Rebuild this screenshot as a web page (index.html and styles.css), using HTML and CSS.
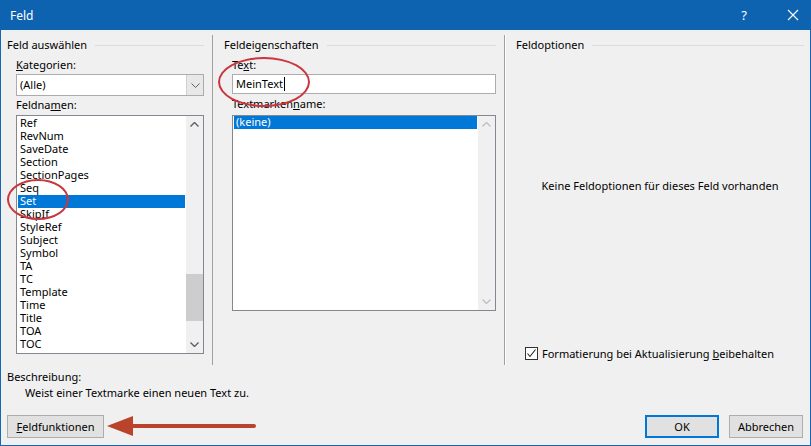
FILE: index.html
```html
<!DOCTYPE html>
<html>

<head>
    <link rel="stylesheet" href="styles.css">
    <title>Feld</title>
</head>

<body>
    <div class="window">
        <div class="titlebar">
            <span class="title">Feld</span>
            <div class="caption_buttons">
                <span class="help">?</span>
                <svg class="close" width="12" height="12" viewBox="0 0 12 12">
                    <path d="M1 1 L11 11 M11 1 L1 11" stroke="#ffffff" stroke-width="1.1" fill="none" />
                </svg>
            </div>
        </div>

        <div class="panels">
            <div class="panel panel_left">
                <div class="group_title">Feld auswählen</div>
                <div class="label indent"><u>K</u>ategorien:</div>
                <div class="combo indent">
                    <span class="combo_value">(Alle)</span>
                    <div class="combo_button">
                        <svg width="9" height="5" viewBox="0 0 9 5">
                            <path d="M0.5 0.5 L4.5 4.5 L8.5 0.5" stroke="#606060" fill="none" />
                        </svg>
                    </div>
                </div>
                <div class="label label_after_combo indent">Feldna<u>m</u>en:</div>
                <div class="listbox listbox_fields indent">
                    <ul class="items">
                        <li>Ref</li>
                        <li>RevNum</li>
                        <li>SaveDate</li>
                        <li>Section</li>
                        <li>SectionPages</li>
                        <li>Seq</li>
                        <li class="selected">Set</li>
                        <li>SkipIf</li>
                        <li>StyleRef</li>
                        <li>Subject</li>
                        <li>Symbol</li>
                        <li>TA</li>
                        <li>TC</li>
                        <li>Template</li>
                        <li>Time</li>
                        <li>Title</li>
                        <li>TOA</li>
                        <li>TOC</li>
                    </ul>
                    <div class="scrollbar">
                        <svg class="arrow" width="9" height="5" viewBox="0 0 9 5">
                            <path d="M0.5 4.5 L4.5 0.5 L8.5 4.5" stroke="#606060" stroke-width="1.4" fill="none" />
                        </svg>
                        <div class="track">
                            <div class="thumb"></div>
                        </div>
                        <svg class="arrow" width="9" height="5" viewBox="0 0 9 5">
                            <path d="M0.5 0.5 L4.5 4.5 L8.5 0.5" stroke="#606060" stroke-width="1.4" fill="none" />
                        </svg>
                    </div>
                </div>
            </div>

            <div class="panel panel_middle">
                <div class="group_title">Feldeigenschaften</div>
                <div class="label indent">Te<u>x</u>t:</div>
                <div class="textbox indent">MeinText<span class="caret"></span></div>
                <div class="label label_second indent">Textmarken<u>n</u>ame:</div>
                <div class="listbox listbox_marks indent">
                    <ul class="items">
                        <li class="selected">(keine)</li>
                    </ul>
                    <div class="scrollbar">
                        <svg class="arrow" width="9" height="5" viewBox="0 0 9 5">
                            <path d="M0.5 4.5 L4.5 0.5 L8.5 4.5" stroke="#c0c0c0" stroke-width="1.4" fill="none" />
                        </svg>
                        <div class="track"></div>
                        <svg class="arrow" width="9" height="5" viewBox="0 0 9 5">
                            <path d="M0.5 0.5 L4.5 4.5 L8.5 0.5" stroke="#c0c0c0" stroke-width="1.4" fill="none" />
                        </svg>
                    </div>
                </div>
            </div>

            <div class="panel panel_right">
                <div class="group_title">Feldoptionen</div>
                <div class="no_options">Keine Feldoptionen für dieses Feld vorhanden</div>
                <div class="check_row">
                    <span class="checkbox">
                        <svg width="11" height="11" viewBox="0 0 11 11">
                            <path d="M1.5 5.5 L4 8.5 L9.5 1.5" stroke="#222222" stroke-width="1.1" fill="none" />
                        </svg>
                    </span>
                    <span>Formatierung bei Aktualisierung <u>b</u>eibehalten</span>
                </div>
            </div>
        </div>

        <div class="bottom">
            <div class="description_label">Beschreibung:</div>
            <div class="description">Weist einer Textmarke einen neuen Text zu.</div>
            <div class="button_row">
                <button class="button button_codes"><u>F</u>eldfunktionen</button>
                <div class="spacer"></div>
                <button class="button button_default">OK</button>
                <button class="button">Abbrechen</button>
            </div>
        </div>

        <!-- annotations drawn over the dialog -->
        <div class="mark mark_set"></div>
        <div class="mark mark_text"></div>
        <svg class="pointer" width="152" height="24" viewBox="0 0 152 24">
            <polygon points="1,12 27,2 27,22" fill="#b9432b" />
            <line x1="25" y1="12" x2="148" y2="12" stroke="#b9432b" stroke-width="4" stroke-linecap="round" />
        </svg>
    </div>
</body>

</html>
```

FILE: styles.css
```css
* {
    box-sizing: border-box;
}

body {
    margin: 0;
    font-family: "Noto Sans", sans-serif;
    font-size: 11px;
    color: #000000;
}

.window {
    position: relative;
    width: 811px;
    height: 446px;
    display: flex;
    flex-direction: column;
    background: #f0f0f0;
    border: 1px solid #1467b4;
    border-top: none;
}

.titlebar {
    height: 30px;
    margin: 0 -1px;
    display: flex;
    align-items: center;
    justify-content: space-between;
    background: #0e63b1;
    color: #ffffff;
    padding-left: 10px;
    font-size: 12px;
}

.caption_buttons {
    display: flex;
    align-items: center;
}

.help {
    font-size: 13px;
    margin-right: 40px;
}

.close {
    margin-right: 12px;
}

.panels {
    display: flex;
    height: 335px;
}

.panel {
    display: flex;
    flex-direction: column;
    margin-top: 5px;
    padding-top: 2px;
}

.panel_left {
    width: 212px;
    padding-left: 6px;
    padding-right: 8px;
    border-right: 1px solid #a0a0a0;
}

.panel_middle {
    width: 292px;
    padding-left: 11px;
    padding-right: 8px;
    border-right: 1px solid #a0a0a0;
}

.panel_right {
    flex: 1;
    padding-left: 10px;
    padding-right: 6px;
    border-left: 1px solid #ffffff;
}

.group_title {
    display: flex;
    align-items: center;
    height: 16px;
    line-height: 16px;
}

.group_title::after {
    content: "";
    flex: 1;
    height: 1px;
    margin-left: 8px;
    background: #dcdcdc;
}

.label {
    height: 16px;
    line-height: 16px;
    margin-top: 4px;
}

.label_after_combo {
    margin-top: 1px;
}

.label + .listbox {
    margin-top: 2px;
}

.indent {
    margin-left: 9px;
}

.panel_middle .indent {
    margin-left: 8px;
}

.combo {
    height: 22px;
    margin-top: 1px;
    display: flex;
    border: 1px solid #acacac;
    background: #ffffff;
}

.combo_value {
    flex: 1;
    line-height: 20px;
    padding-left: 3px;
}

.combo_button {
    width: 17px;
    display: flex;
    align-items: center;
    justify-content: center;
    background: #e8e8e8;
    border-left: 1px solid #d0d0d0;
}

.listbox {
    display: flex;
    border: 1px solid #828790;
    background: #ffffff;
}

.listbox_fields {
    height: 239px;
}

.listbox_marks {
    height: 196px;
    margin-top: 3px !important;
}

.items {
    flex: 1;
    margin: 0;
    padding: 0 1px;
    list-style: none;
}

.listbox_fields .items {
    padding-top: 1px;
}

.items li {
    height: 13px;
    line-height: 12px;
    padding-left: 2px;
    white-space: nowrap;
}

.items li.selected {
    background: #0078d7;
    color: #ffffff;
}

.scrollbar {
    width: 17px;
    display: flex;
    flex-direction: column;
    align-items: center;
    background: #f0f0f0;
}

.scrollbar .arrow {
    margin: 6px 0;
}

.track {
    flex: 1;
    width: 100%;
    position: relative;
}

.thumb {
    position: absolute;
    left: 0;
    right: 0;
    top: 141px;
    height: 47px;
    background: #cdcdcd;
}

.textbox {
    height: 20px;
    margin-top: 1px;
    line-height: 18px;
    padding-left: 3px;
    border: 1px solid #acacac;
    background: #ffffff;
    display: flex;
    align-items: center;
}

.caret {
    display: inline-block;
    width: 1px;
    height: 14px;
    margin-left: 1px;
    background: #000000;
}

.label_second {
    margin-top: 2px;
}

.no_options {
    margin-top: 125px;
    text-align: center;
    line-height: 16px;
}

.check_row {
    margin-top: auto;
    margin-bottom: 4px;
    margin-left: 9px;
    display: flex;
    align-items: center;
    height: 16px;
}

.checkbox {
    width: 13px;
    height: 13px;
    border: 1px solid #333333;
    background: #ffffff;
    display: flex;
    align-items: center;
    justify-content: center;
    margin-right: 4px;
}

.bottom {
    flex: 1;
    padding: 4px 7px 0 6px;
}

.description_label,
.description {
    height: 16px;
    line-height: 16px;
}

.description {
    padding-left: 18px;
}

.button_row {
    display: flex;
    margin-top: 14px;
}

.spacer {
    flex: 1;
}

.button {
    height: 23px;
    width: 74px;
    margin-left: 10px;
    padding: 0;
    font-family: "Noto Sans", sans-serif;
    font-size: 11px;
    color: #000000;
    background: #e1e1e1;
    border: 1px solid #adadad;
}

.button_codes {
    width: 97px;
    margin-left: 0;
}

.button_default {
    border: 2px solid #0078d7;
}

.mark {
    position: absolute;
    border: 2px solid #c9363e;
    border-radius: 50%;
}

.mark_set {
    left: 6px;
    top: 179px;
    width: 62px;
    height: 41px;
}

.mark_text {
    left: 217px;
    top: 57px;
    width: 92px;
    height: 50px;
}

.pointer {
    position: absolute;
    left: 105px;
    top: 414px;
}
```
